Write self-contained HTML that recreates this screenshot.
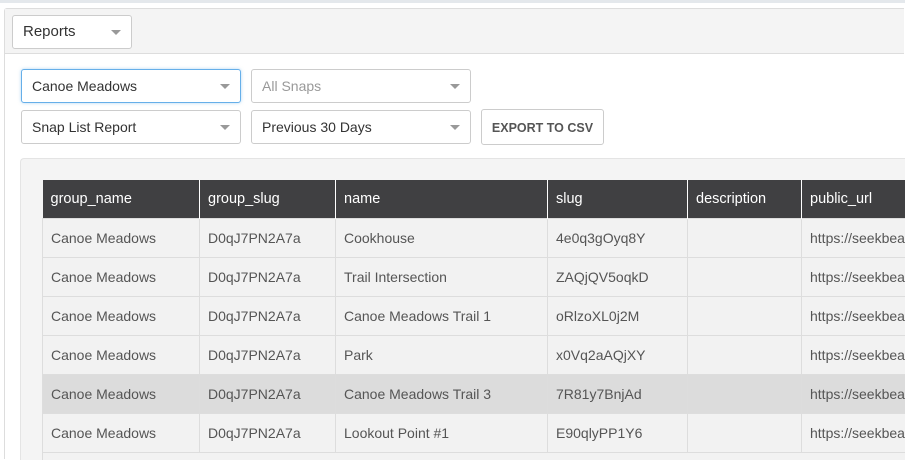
<!DOCTYPE html>
<html><head><style>
html,body{margin:0;width:905px;height:460px;overflow:hidden}
body{background:#fff;font-family:"Liberation Sans",sans-serif;font-size:14px;color:#555;position:relative}
.top{position:absolute;left:0;top:0;width:905px;height:3px;background:#e4e8ec}
.panel{position:absolute;left:4px;top:8px;width:899px;height:450px;border:1px solid #ddd;border-right:none;border-bottom:none;border-radius:3px 0 0 0;background:#fff}
.hdr{position:absolute;left:0;top:0;right:0;height:44px;background:#f4f4f4;border-bottom:1px solid #ddd}
.sel{position:absolute;height:34px;border:1px solid #ccc;border-radius:3px;background:#fff;box-sizing:border-box;line-height:32px;padding-left:10px;color:#333}
.sel:after{content:"";position:absolute;right:10px;top:14px;border-left:5px solid transparent;border-right:5px solid transparent;border-top:5px solid #999}
.btn{position:absolute;left:481px;top:109px;width:123px;height:36px;border:1px solid #ccc;border-radius:3px;box-sizing:border-box;line-height:36px;text-align:center;font-weight:bold;font-size:12.5px;color:#555}
.box{position:absolute;left:20px;top:158px;width:884px;height:301px;background:#f4f4f4;border:1px solid #e4e4e4;border-right:none;border-bottom:none;border-radius:4px 0 0 0}
.wrap{position:absolute;left:42px;top:180px;width:863px;height:273px;overflow:hidden}
.tail{position:absolute;left:42px;top:453px;width:863px;height:7px;background:#f2f2f2;border-left:1px solid #ddd;box-sizing:border-box}
table{border-collapse:collapse;table-layout:fixed;width:879px}
th{background:#404042;color:#fff;font-weight:normal;text-align:left;height:38px;padding:0 8px;border-left:1px solid #fff;font-size:14.5px}
td{height:38px;padding:0 8px;border:1px solid #ddd;background:#f2f2f2;white-space:nowrap;overflow:hidden}
tr.hl td{background:#dcdcdc}
</style></head><body>
<div class="top"></div>
<div class="panel"><div class="hdr"></div></div>
<div class="sel" style="left:12px;top:15px;width:120px;font-size:15px">Reports</div>
<div class="sel" style="left:21px;top:69px;width:220px;border-color:#66afe9;box-shadow:0 0 3px rgba(102,175,233,.5)">Canoe Meadows</div>
<div class="sel" style="left:251px;top:69px;width:220px;color:#999">All Snaps</div>
<div class="sel" style="left:21px;top:110px;width:220px">Snap List Report</div>
<div class="sel" style="left:251px;top:110px;width:220px">Previous 30 Days</div>
<div class="btn">EXPORT TO CSV</div>
<div class="box"></div>
<div class="wrap">
<table>
<colgroup><col style="width:157px"><col style="width:136px"><col style="width:212px"><col style="width:140px"><col style="width:114px"><col style="width:120px"></colgroup>
<tr><th style="border-left:none">group_name</th><th>group_slug</th><th>name</th><th>slug</th><th>description</th><th>public_url</th></tr>
<tr><td>Canoe Meadows</td><td>D0qJ7PN2A7a</td><td>Cookhouse</td><td>4e0q3gOyq8Y</td><td></td><td>https://seekbeak</td></tr>
<tr><td>Canoe Meadows</td><td>D0qJ7PN2A7a</td><td>Trail Intersection</td><td>ZAQjQV5oqkD</td><td></td><td>https://seekbeak</td></tr>
<tr><td>Canoe Meadows</td><td>D0qJ7PN2A7a</td><td>Canoe Meadows Trail 1</td><td>oRlzoXL0j2M</td><td></td><td>https://seekbeak</td></tr>
<tr><td>Canoe Meadows</td><td>D0qJ7PN2A7a</td><td>Park</td><td>x0Vq2aAQjXY</td><td></td><td>https://seekbeak</td></tr>
<tr class="hl"><td>Canoe Meadows</td><td>D0qJ7PN2A7a</td><td>Canoe Meadows Trail 3</td><td>7R81y7BnjAd</td><td></td><td>https://seekbeak</td></tr>
<tr><td>Canoe Meadows</td><td>D0qJ7PN2A7a</td><td>Lookout Point #1</td><td>E90qlyPP1Y6</td><td></td><td>https://seekbeak</td></tr>
</table>
</div>
<div class="tail"></div>
</body></html>
